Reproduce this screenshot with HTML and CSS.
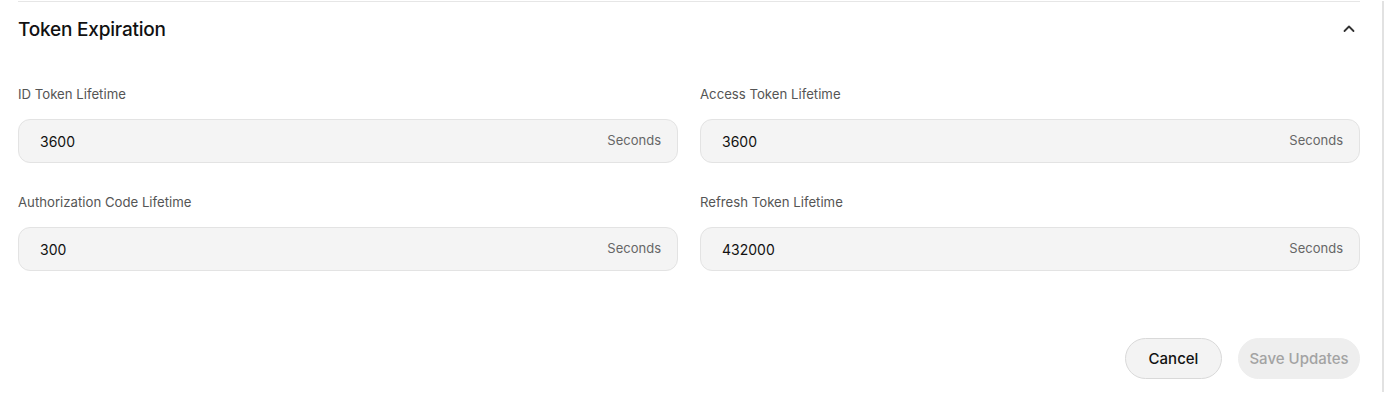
FILE: index.html
```html
<!DOCTYPE html>
<html>
<head>
<meta charset="utf-8">
<link rel="stylesheet" href="styles.css">
</head>
<body>
<div class="panel">
  <section class="section">
    <header class="section-head">
      <h2 class="section-title">Token Expiration</h2>
      <svg class="chevron" width="14" height="14" viewBox="0 0 14 14"><path d="M2.5 9 L7 4.5 L11.5 9" fill="none" stroke="#333" stroke-width="1.8" stroke-linecap="round" stroke-linejoin="round"/></svg>
    </header>
    <div class="grid">
      <div class="field">
        <label class="label">ID Token Lifetime</label>
        <div class="input"><span class="value">3600</span><span class="unit">Seconds</span></div>
      </div>
      <div class="field">
        <label class="label">Access Token Lifetime</label>
        <div class="input"><span class="value">3600</span><span class="unit">Seconds</span></div>
      </div>
      <div class="field">
        <label class="label">Authorization Code Lifetime</label>
        <div class="input"><span class="value">300</span><span class="unit">Seconds</span></div>
      </div>
      <div class="field">
        <label class="label">Refresh Token Lifetime</label>
        <div class="input"><span class="value">432000</span><span class="unit">Seconds</span></div>
      </div>
    </div>
    <div class="actions">
      <button class="btn btn-cancel">Cancel</button>
      <button class="btn btn-save" disabled>Save Updates</button>
    </div>
  </section>
</div>
</body>
</html>
```

FILE: styles.css
```css
html, body {
  margin: 0;
  padding: 0;
  background: #fff;
  font-family: Inter, "Noto Sans", sans-serif;
  color: #111;
}
.panel {
  width: 1384px;
  height: 391px;
  border-right: 2px solid #e2e2e2;
  box-sizing: border-box;
  padding: 0 22px 0 18px;
}
.section {
  border-top: 1px solid #e6e6e6;
  margin-top: 1px;
}
.section-head {
  display: flex;
  align-items: center;
  justify-content: space-between;
  height: 54px;
  padding-right: 4px;
}
.section-title {
  margin: 0;
  font-size: 19px;
  font-weight: 500;
  letter-spacing: -0.2px;
  color: #111;
}
.chevron {
  display: block;
}
.grid {
  display: grid;
  grid-template-columns: 1fr 1fr;
  column-gap: 22px;
  row-gap: 31px;
  margin-top: 30px;
}
.field {
  display: flex;
  flex-direction: column;
}
.label {
  font-size: 13.2px;
  color: #555;
  line-height: 16px;
  margin-bottom: 17px;
}
.input {
  height: 44px;
  box-sizing: border-box;
  border: 1px solid #e3e3e3;
  border-radius: 12px;
  background: #f4f4f4;
  display: flex;
  align-items: center;
  justify-content: space-between;
  padding: 0 16px 0 21px;
}
.value {
  font-size: 14px;
  color: #111;
}
.unit {
  font-size: 13px;
  color: #666;
  position: relative;
  top: -1px;
}
.actions {
  display: flex;
  justify-content: flex-end;
  gap: 16px;
  margin-top: 67px;
}
.btn {
  font-family: Inter, "Noto Sans", sans-serif;
  font-size: 15px;
  font-weight: 500;
  height: 41px;
  border-radius: 21px;
  padding: 0 22px;
  box-sizing: border-box;
}
.btn-cancel {
  background: #f3f3f3;
  border: 1px solid #d9d9d9;
  color: #111;
  width: 97px;
}
.btn-save {
  background: #eeeeee;
  border: 1px solid #eeeeee;
  color: #a3a3a3;
  width: 122px;
  padding: 0 10px;
}
```
